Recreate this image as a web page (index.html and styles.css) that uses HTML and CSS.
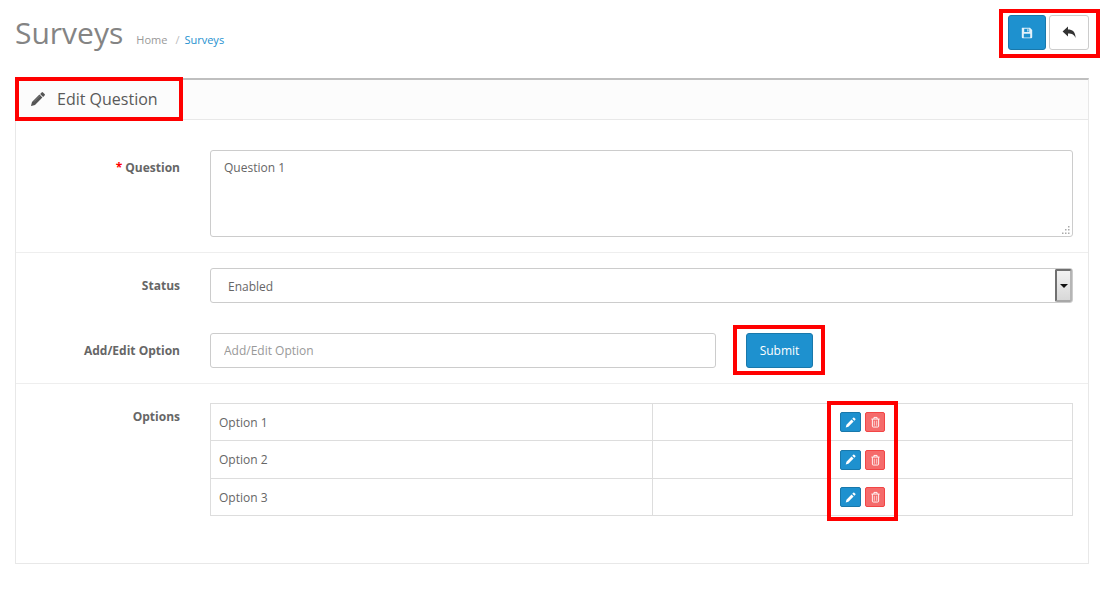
FILE: index.html
```html
<!DOCTYPE html>
<html lang="en">
<head>
<meta charset="utf-8">
<title>Surveys</title>
<link rel="stylesheet" href="styles.css">
</head>
<body>
<div class="page">
  <header class="page-head">
    <div class="title-wrap">
      <h1>Surveys</h1>
      <nav class="crumbs"><a class="crumb-home">Home</a><span class="sep">/</span><a class="crumb-cur">Surveys</a></nav>
    </div>
    <div class="actions">
      <button class="btn btn-save" type="button" aria-label="Save">
        <svg viewBox="0 0 12 12" width="12" height="12"><path fill="#e4f2fa" fill-rule="evenodd" d="M1 .8h8l2.2 2.2v7.2a1 1 0 0 1-1 1H1.8a1 1 0 0 1-1-1V1zM3.200 1.800v3.100h5V1.800zM6.300 2.200h1.200v2.200H6.300zM2.800 6.800v3.700h6.400V6.800z"/></svg>
      </button>
      <button class="btn btn-back" type="button" aria-label="Back">
        <svg viewBox="0 0 14 13" width="14" height="13"><path fill="#333" d="M6 .6v3c4.400 0 7.400 2 7.600 8.400-1.200-3.400-3.400-4.600-7.600-4.600v3L.6 5.400z"/></svg>
      </button>
    </div>
  </header>

  <section class="panel">
    <div class="panel-head">
      <svg class="head-icon" viewBox="0 0 14 14" width="14" height="14"><path fill="#555" d="M10.600.4a1 1 0 0 1 1.400 0L13.600 2a1 1 0 0 1 0 1.400l-1.500 1.500L9.100 1.900zM8.400 2.600l3 3-7.400 7.400-3.800 1-.2-.2 1-3.800z"/><path stroke="#8a8a8a" stroke-width=".7" d="M3 9.600l6-6"/></svg>
      <h2>Edit Question</h2>
    </div>
    <form class="panel-body">
      <div class="row row-question">
        <label class="label"><span class="req">*</span> Question</label>
        <div class="area-wrap">
          <textarea class="control area">Question 1</textarea>
          <svg class="grip" viewBox="0 0 9 9" width="9" height="9"><path fill="#aaa" d="M7 0h1.500v1.500H7zM4 3h1.500v1.500H4zM7 3h1.500v1.500H7zM1 6.500h1.500V8H1zM4 6.500h1.500V8H4zM7 6.500h1.500V8H7z"/></svg>
        </div>
      </div>
      <div class="group group-status">
        <div class="row row-status">
          <label class="label">Status</label>
          <div class="select-wrap">
            <select class="control sel"><option>Enabled</option></select>
            <span class="sel-btn"><i class="caret"></i></span>
          </div>
        </div>
        <div class="row row-option">
          <label class="label">Add/Edit Option</label>
          <input class="control opt-input" type="text" placeholder="Add/Edit Option">
          <button class="btn-submit" type="button">Submit</button>
        </div>
      </div>
      <div class="row row-options">
        <label class="label">Options</label>
        <table class="opts">
          <tr class="r1"><td class="c-name">Option 1</td><td class="c-act"><span class="act">
            <button class="mini mini-edit" type="button" aria-label="Edit"><svg viewBox="0 0 12 12" width="11" height="11"><path fill="#fff" d="M9 .7a.8.8 0 0 1 1.100 0l1.200 1.200a.8.8 0 0 1 0 1.100L10.200 4.100 7.900 1.800zM7.100 2.600l2.300 2.300-5.700 5.700-2.900.8.800-2.900z"/></svg></button>
            <button class="mini mini-del" type="button" aria-label="Delete"><svg viewBox="0 0 12 12" width="11" height="12"><path fill="none" stroke="#fff" d="M1.500 2.800h9M4.300 2.800V1h3.400v1.800M2.600 2.800v7.700a1 1 0 0 0 1 1h4.800a1 1 0 0 0 1-1V2.800"/><path fill="#fff" opacity=".7" d="M4.200 4.500h1v5.500h-1zM6.800 4.500h1v5.500h-1z"/></svg></button>
          </span></td></tr>
          <tr class="r2"><td class="c-name">Option 2</td><td class="c-act"><span class="act">
            <button class="mini mini-edit" type="button" aria-label="Edit"><svg viewBox="0 0 12 12" width="11" height="11"><path fill="#fff" d="M9 .7a.8.8 0 0 1 1.100 0l1.200 1.200a.8.8 0 0 1 0 1.100L10.200 4.100 7.900 1.800zM7.100 2.600l2.300 2.300-5.700 5.700-2.900.8.800-2.900z"/></svg></button>
            <button class="mini mini-del" type="button" aria-label="Delete"><svg viewBox="0 0 12 12" width="11" height="12"><path fill="none" stroke="#fff" d="M1.500 2.800h9M4.300 2.800V1h3.400v1.800M2.600 2.800v7.700a1 1 0 0 0 1 1h4.800a1 1 0 0 0 1-1V2.800"/><path fill="#fff" opacity=".7" d="M4.200 4.500h1v5.500h-1zM6.800 4.500h1v5.500h-1z"/></svg></button>
          </span></td></tr>
          <tr class="r3"><td class="c-name">Option 3</td><td class="c-act"><span class="act">
            <button class="mini mini-edit" type="button" aria-label="Edit"><svg viewBox="0 0 12 12" width="11" height="11"><path fill="#fff" d="M9 .7a.8.8 0 0 1 1.100 0l1.200 1.200a.8.8 0 0 1 0 1.100L10.200 4.100 7.900 1.800zM7.100 2.600l2.300 2.300-5.700 5.700-2.900.8.800-2.900z"/></svg></button>
            <button class="mini mini-del" type="button" aria-label="Delete"><svg viewBox="0 0 12 12" width="11" height="12"><path fill="none" stroke="#fff" d="M1.500 2.800h9M4.300 2.800V1h3.400v1.800M2.600 2.800v7.700a1 1 0 0 0 1 1h4.800a1 1 0 0 0 1-1V2.800"/><path fill="#fff" opacity=".7" d="M4.200 4.500h1v5.500h-1zM6.800 4.500h1v5.500h-1z"/></svg></button>
          </span></td></tr>
        </table>
      </div>
    </form>
  </section>
</div>
<div class="mark mark-actions"></div>
<div class="mark mark-head"></div>
<div class="mark mark-submit"></div>
<div class="mark mark-icons"></div>
</body>
</html>
```

FILE: styles.css
```css
* { box-sizing: border-box; }
html, body { margin: 0; padding: 0; background: #fff; }
body { font-family: "Open Sans", sans-serif; font-size: 12px; color: #666; position: relative; height: 607px; overflow: hidden; }
.page { padding: 0 20px 0 15px; }

.page-head { display: flex; justify-content: space-between; height: 78px; }
.title-wrap { display: flex; align-items: baseline; padding-top: 12px; height: 60px; }
h1 { margin: 0; font-size: 30px; font-weight: 400; color: #848484; line-height: 42px; }
.crumbs { margin-left: 13px; font-size: 11px; display: flex; }
.crumb-home { color: #999; }
.sep { color: #bbb; margin: 0 5px 0 8px; }
.crumb-cur { color: #1e91cf; }

.actions { display: flex; gap: 3px; padding-top: 15px; align-items: flex-start; }
.btn { width: 38px; height: 35px; border-radius: 3px; padding: 0; display: flex; align-items: center; justify-content: center; cursor: pointer; }
.btn-save { background: #1e91cf; border: 1px solid #1978ab; }
.btn-back { width: 40px; background: #fff; border: 1px solid #ccc; }

.panel { border: 1px solid #e8e8e8; border-top: 2px solid #bfbfbf; height: 486px; }
.panel-head { display: flex; align-items: center; height: 40px; background: #fcfcfc; border-bottom: 1px solid #e8e8e8; padding: 0 0 2px 15px; gap: 12px; }
h2 { margin: 0; font-size: 16px; font-weight: 400; color: #595959; }
.head-icon { display: block; }

.row { display: flex; align-items: flex-start; }
.label { width: 194px; flex: none; padding: 0 30px 0 0; text-align: right; font-weight: 700; font-size: 12px; color: #666; }
.req { color: #f00; }
.control { font-family: "Open Sans", sans-serif; font-size: 12px; color: #666; background: #fff; border: 1px solid #ccc; border-radius: 3px; }

.row-question { padding: 30px 0 15px; height: 133px; border-bottom: 1px solid #eee; }
.row-question .label { padding-top: 9px; }
.area-wrap { position: relative; width: 863px; height: 87px; }
.area { display: block; width: 100%; height: 100%; padding: 8px 13px; line-height: 18px; resize: none; }
.grip { position: absolute; right: 3px; bottom: 2px; pointer-events: none; }

.group-status { height: 131px; border-bottom: 1px solid #eee; padding-top: 15px; }
.row-status { height: 65px; }
.row-status .label { padding-top: 9px; }
.select-wrap { position: relative; width: 863px; height: 35px; }
.sel { width: 100%; height: 35px; padding: 2px 17px 0; appearance: none; -webkit-appearance: none; }
.sel-btn { position: absolute; top: 1px; right: 1px; width: 17px; height: 33px; border: 2px solid #707070; border-right-color: #b5b5b5; border-bottom-color: #a8a8a8; border-radius: 2px; background: linear-gradient(#f2f2f2, #d8d8d8); display: flex; align-items: center; justify-content: center; pointer-events: none; }
.caret { width: 0; height: 0; border-left: 4px solid transparent; border-right: 4px solid transparent; border-top: 4px solid #111; }

.row-option .label { padding-top: 9px; }
.opt-input { width: 506px; height: 35px; padding: 0 13px; }
.opt-input::placeholder { color: #999; opacity: 1; }
.btn-submit { margin-left: 30px; width: 67px; height: 35px; background: #1e91cf; border: 1px solid #1978ab; border-radius: 3px; color: #fff; font-family: "Open Sans", sans-serif; font-size: 12px; padding: 0; cursor: pointer; }

.row-options { padding-top: 19px; }
.row-options .label { padding-top: 5px; }
.opts { width: 863px; border-collapse: collapse; font-size: 12px; color: #666; table-layout: fixed; }
.opts td { border: 1px solid #ddd; padding: 0 8px; }
.r1 td { height: 37px; }
.r2 td { height: 38px; }
.r3 td { height: 37px; }
.c-name { width: 442px; }
.c-act { text-align: center; }
.act { display: inline-flex; gap: 4px; vertical-align: middle; }
.mini { width: 21px; height: 20px; border-radius: 2px; padding: 0; display: flex; align-items: center; justify-content: center; cursor: pointer; }
.mini-edit { background: #1e91cf; border: 1px solid #1978ab; }
.mini-del { width: 20px; background: #f56b6b; border: 1px solid #f24545; }

.mark { position: absolute; border: 4px solid #f00; pointer-events: none; }
.mark-actions { left: 999px; top: 9px; width: 101px; height: 49px; }
.mark-head { left: 15px; top: 77px; width: 168px; height: 44px; }
.mark-submit { left: 733px; top: 325px; width: 92px; height: 50px; }
.mark-icons { left: 827px; top: 401px; width: 71px; height: 120px; }
```
